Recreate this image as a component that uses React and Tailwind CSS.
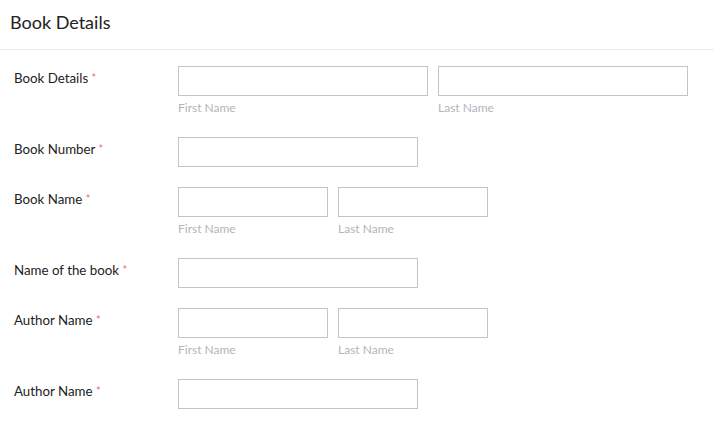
export default function App() {
  const rows = [
    { label: "Book Details", kind: "name", w: "w-[250px]" },
    { label: "Book Number", kind: "single" },
    { label: "Book Name", kind: "name", w: "w-[150px]" },
    { label: "Name of the book", kind: "single" },
    { label: "Author Name", kind: "name", w: "w-[150px]" },
    { label: "Author Name", kind: "single" },
  ];

  return (
    <div className="min-h-screen bg-white font-['Lato','Open_Sans',sans-serif] text-[#222]">
      <div className="h-[50px] border-b border-[#ececec] px-[10px] pt-[10px]">
        <h1 className="text-[18px] leading-[24px]">Book Details</h1>
      </div>
      <div className="pt-[16px]">
        {rows.map((r, i) => (
          <div key={i} className="flex mb-[20px]">
            <div className="w-[178px] pl-[14px] pt-[3px] text-[13.3px] leading-[18px]">
              {r.label} <span className="text-[#ea6a6a] text-[11px] align-top">*</span>
            </div>
            {r.kind === "name" ? (
              <div className="flex gap-[10px]">
                <div>
                  <input className={`${r.w} h-[30px] border border-[#c4c4c4] outline-none block`} />
                  <div className="mt-[3px] mb-[1px] text-[12px] leading-[17px] text-[#b1b6bb]">First Name</div>
                </div>
                <div>
                  <input className={`${r.w} h-[30px] border border-[#c4c4c4] outline-none block`} />
                  <div className="mt-[3px] mb-[1px] text-[12px] leading-[17px] text-[#b1b6bb]">Last Name</div>
                </div>
              </div>
            ) : (
              <input className="w-[240px] h-[30px] border border-[#c4c4c4] outline-none block" />
            )}
          </div>
        ))}
      </div>
    </div>
  );
}
